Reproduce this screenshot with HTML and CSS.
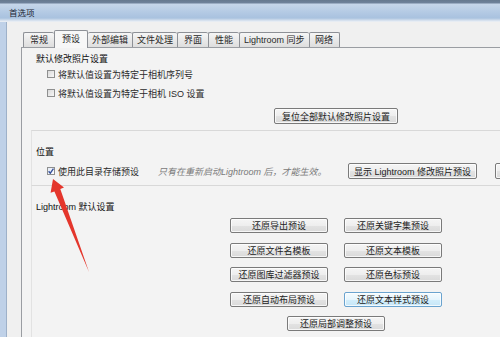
FILE: index.html
```html
<!DOCTYPE html>
<html lang="zh-CN">

<head>
    <meta charset="UTF-8">
    <title>首选项</title>
    <link rel="stylesheet" href="styles.css">
</head>

<body>
    <div class="window">
        <div class="titlebar"><span class="title">首选项</span></div>

        <div class="client">
            <div class="tabs">
                <div class="tab">常规</div>
                <div class="tab active">预设</div>
                <div class="tab">外部编辑</div>
                <div class="tab">文件处理</div>
                <div class="tab">界面</div>
                <div class="tab">性能</div>
                <div class="tab">Lightroom 同步</div>
                <div class="tab">网络</div>
            </div>

            <div class="panel">
                <!-- 默认修改照片设置 -->
                <div class="group first">
                    <div class="group-title">默认修改照片设置</div>
                    <label class="check"><span class="box"></span>将默认值设置为特定于相机序列号</label>
                    <label class="check second"><span class="box"></span>将默认值设置为特定于相机 ISO 设置</label>
                    <div class="btn-row">
                        <button class="btn reset-all">复位全部默认修改照片设置</button>
                    </div>
                </div>

                <!-- 位置 -->
                <div class="group">
                    <div class="group-title">位置</div>
                    <div class="loc-row">
                        <label class="check">
                            <span class="box checked">
                                <svg width="6" height="6" viewBox="0 0 6 6">
                                    <path d="M0.6 3.2 L2.3 5.2 L5.5 0.6" fill="none" stroke="#34509a" stroke-width="1.4" />
                                </svg>
                            </span>使用此目录存储预设
                        </label>
                        <span class="note">只有在重新启动Lightroom 后，才能生效。</span>
                        <button class="btn show-presets">显示 Lightroom 修改照片预设</button>
                        <button class="btn cut" aria-hidden="true"></button>
                    </div>
                </div>

                <!-- Lightroom 默认设置 -->
                <div class="group">
                    <div class="group-title">Lightroom 默认设置</div>
                    <div class="reset-grid">
                        <button class="btn">还原导出预设</button>
                        <button class="btn">还原关键字集预设</button>
                        <button class="btn">还原文件名模板</button>
                        <button class="btn">还原文本模板</button>
                        <button class="btn">还原图库过滤器预设</button>
                        <button class="btn">还原色标预设</button>
                        <button class="btn">还原自动布局预设</button>
                        <button class="btn hover">还原文本样式预设</button>
                        <button class="btn last">还原局部调整预设</button>
                    </div>
                </div>
            </div>
        </div>

        <svg class="arrow" width="500" height="337" viewBox="0 0 500 337">
            <polygon points="53,179 64,187.6 60.3,189.1 89,272 54.4,191.4 50.6,192.8" fill="#e4362c" />
        </svg>
    </div>
</body>

</html>
```

FILE: styles.css
```css
* {
    margin: 0;
    padding: 0;
    box-sizing: border-box;
}

body {
    width: 500px;
    height: 337px;
    overflow: hidden;
    background: #f0f0f0;
    font-family: "Liberation Sans", "Noto Sans CJK SC", sans-serif;
    font-size: 9px;
    color: #2a2a2a;
}

.window {
    position: relative;
    height: 337px;
    overflow: hidden;
}

.titlebar {
    height: 22px;
    padding-left: 9px;
    line-height: 26px;
    background: linear-gradient(#66798f 0, #6f829b 3px, #c6d6ea 4px, #b4cae4 12px, #a9c2df 18px, #dfe7f1 21px, #eef1f5 22px);
}

.title {
    font-size: 8.5px;
    color: #1a2433;
}

.client {
    height: 315px;
    padding: 8px 0 0 15px;
    border-left: 6px solid #bfd1e8;
    box-shadow: inset 1px 0 0 #9eb1c9;
}

/* tabs */
.tabs {
    display: flex;
    align-items: flex-end;
    height: 17px;
    margin-left: 2px;
}

.tab {
    flex-shrink: 0;
    min-width: 31px;
    height: 15px;
    padding: 0 4px;
    line-height: 14px;
    text-align: center;
    border: 1px solid #8d9096;
    border-bottom: none;
    border-right: none;
    border-radius: 2px 2px 0 0;
    background: linear-gradient(#f6f6f6, #e9e9e9 50%, #dedede);
}

.tab:last-child {
    border-right: 1px solid #8d9096;
}

.tab.active {
    position: relative;
    min-width: 34px;
    height: 18px;
    margin-bottom: -1px;
    line-height: 16px;
    background: #f7f7f7;
    border-right: 1px solid #8d9096;
    z-index: 1;
}

.tab.active+.tab {
    border-left: none;
}

.panel {
    height: 290px;
    border-top: 1px solid #9a9da2;
    border-left: 1px solid #9a9da2;
    background: #f3f3f3;
}

/* groups */
.group {
    margin-left: 9px;
    padding: 15px 0 6px 4px;
    border-top: 1px solid #d8d8d8;
    border-left: 1px solid #e2e2e2;
}

.group.first {
    margin-left: 0;
    padding: 5px 0 6px 14px;
    border: none;
}

.group-title {
    line-height: 12px;
    color: #111;
}

.check {
    display: flex;
    flex-shrink: 0;
    align-items: center;
    height: 12px;
    margin: 3px 0 0 11px;
    white-space: nowrap;
}

.check.second {
    margin-top: 7px;
}

.box {
    display: flex;
    align-items: center;
    justify-content: center;
    width: 8px;
    height: 8px;
    margin-right: 3px;
    border: 1px solid #8e8f8f;
    background: linear-gradient(135deg, #d9d9d9, #f7f7f7);
}

.box.checked {
    background: linear-gradient(135deg, #e3eaf6, #ffffff);
}

.btn-row {
    margin-top: 9px;
    padding-left: 238px;
}

/* buttons */
.btn {
    display: block;
    flex-shrink: 0;
    height: 16px;
    font-family: inherit;
    font-size: 9px;
    color: #222;
    white-space: nowrap;
    border: 1px solid #7a7a7a;
    border-radius: 2px;
    background: linear-gradient(#f5f5f5, #eeeeee 50%, #e3e3e3 51%, #dadada);
    box-shadow: inset 0 0 0 1px rgba(255, 255, 255, 0.75);
}

.btn.reset-all {
    width: 124px;
}

.btn.hover {
    border-color: #6aa3cf;
    background: linear-gradient(#f5fbfe, #e6f5fd 50%, #d3eefb 51%, #c6e6f7);
}

.loc-row {
    display: flex;
    align-items: center;
    height: 16px;
    margin-top: 5px;
}

.loc-row .check {
    margin-top: 0;
}

.note {
    flex-shrink: 0;
    width: 190px;
    margin-left: 19px;
    font-style: italic;
    color: #7a7a7a;
    white-space: nowrap;
}

.btn.show-presets {
    width: 129px;
}

.btn.cut {
    width: 60px;
    margin-left: 18px;
}

.reset-grid {
    display: grid;
    grid-template-columns: 98px 98px;
    column-gap: 16px;
    row-gap: 9.5px;
    margin: 5px 0 0 194px;
}

.reset-grid .btn {
    width: 98px;
    height: 15px;
}

.reset-grid .btn.last {
    grid-column: 1 / span 2;
    justify-self: center;
}

.arrow {
    position: absolute;
    top: 0;
    left: 0;
    pointer-events: none;
}
```
